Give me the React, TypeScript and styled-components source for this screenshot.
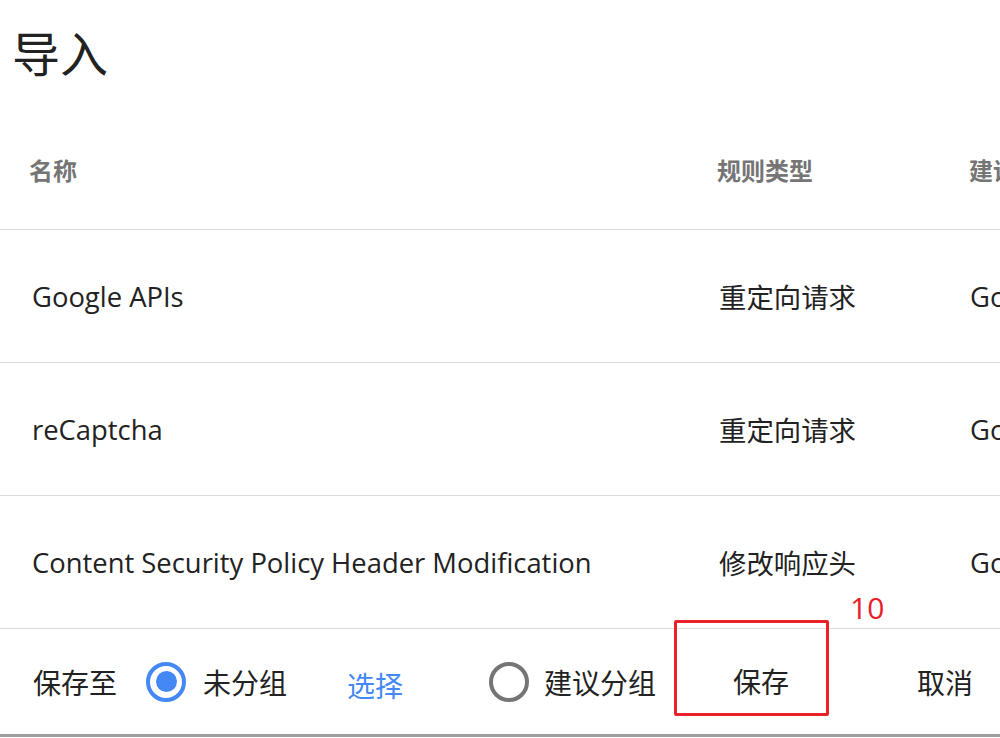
import React from 'react';
import styled, { createGlobalStyle } from 'styled-components';

const GlobalStyle = createGlobalStyle`
  html, body {
    margin: 0;
    padding: 0;
    background: #fff;
  }
  body {
    font-family: "Open Sans", "Noto Sans CJK SC", sans-serif;
    color: #222;
  }
`;

interface Rule {
  name: string;
  type: string;
  group: string;
}

const rules: Rule[] = [
  { name: 'Google APIs', type: '重定向请求', group: 'Google' },
  { name: 'reCaptcha', type: '重定向请求', group: 'Google' },
  { name: 'Content Security Policy Header Modification', type: '修改响应头', group: 'Google' },
];

const Page = styled.div`
  width: 1000px;
  height: 738px;
  overflow: hidden;
  display: flex;
  flex-direction: column;
`;

const Title = styled.h1`
  margin: 0;
  height: 116px;
  padding: 22px 0 0 12px;
  box-sizing: border-box;
  font-size: 48px;
  font-weight: 400;
  line-height: 64px;
  color: #222;
`;

const Grid = styled.div`
  display: grid;
  grid-template-columns: 687px 251px 200px;
  align-items: center;
  padding-left: 32px;
  white-space: nowrap;
`;

const HeadRow = styled(Grid)`
  height: 113px;
  padding-bottom: 6px;
  box-sizing: border-box;
  font-size: 24px;
  font-weight: 700;
  color: #757575;
  padding-left: 29px;
  grid-template-columns: 688px 252px 200px;
`;

const BodyRow = styled(Grid)`
  height: 133px;
  border-top: 1px solid #dcdcdc;
  box-sizing: border-box;
  font-size: 27.4px;
  color: #222;
`;

const Footer = styled.div`
  height: 105px;
  border-top: 1px solid #dcdcdc;
  display: flex;
  align-items: center;
  padding-left: 33px;
  font-size: 28px;
  color: #222;
  white-space: nowrap;
  box-shadow: 0 3px 0 0 #9e9e9e;
`;

const Label = styled.span<{ $gap?: number }>`
  margin-right: ${p => p.$gap ?? 0}px;
`;

const Radio = styled.span<{ $checked?: boolean; $gap?: number }>`
  flex: none;
  width: 40px;
  height: 40px;
  border-radius: 50%;
  box-sizing: border-box;
  border: 4px solid ${p => (p.$checked ? '#4488f6' : '#757575')};
  display: flex;
  align-items: center;
  justify-content: center;
  margin-right: ${p => p.$gap ?? 15}px;
  &::after {
    content: '';
    width: 21px;
    height: 21px;
    border-radius: 50%;
    background: #4488f6;
    display: ${p => (p.$checked ? 'block' : 'none')};
  }
`;

const Link = styled.span`
  color: #4488f6;
  margin-top: 6px;
  margin-right: 86px;
`;

const SaveButton = styled.span`
  position: relative;
  flex: none;
  width: 155px;
  height: 40px;
  line-height: 40px;
  margin-left: 18px;
  margin-right: 88px;
  padding-left: 59px;
  box-sizing: border-box;
`;

const Marker = styled.span`
  position: absolute;
  left: 0;
  top: -42px;
  width: 155px;
  height: 96px;
  border: 3px solid #e8212b;
  border-radius: 2px;
  box-sizing: border-box;
`;

const MarkerCount = styled.span`
  position: absolute;
  left: 176px;
  top: -75px;
  line-height: normal;
  color: #e8212b;
  font-size: 30px;
`;

export default function App() {
  return (
    <Page>
      <GlobalStyle />
      <Title>导入</Title>
      <HeadRow>
        <span>名称</span>
        <span>规则类型</span>
        <span>建议分组</span>
      </HeadRow>
      {rules.map(r => (
        <BodyRow key={r.name}>
          <span>{r.name}</span>
          <span>{r.type}</span>
          <span>{r.group}</span>
        </BodyRow>
      ))}
      <Footer>
        <Label $gap={29}>保存至</Label>
        <Radio $checked $gap={17} />
        <Label $gap={60}>未分组</Label>
        <Link>选择</Link>
        <Radio />
        <Label>建议分组</Label>
        <SaveButton>
          保存
          <Marker />
          <MarkerCount>10</MarkerCount>
        </SaveButton>
        <span>取消</span>
      </Footer>
    </Page>
  );
}
